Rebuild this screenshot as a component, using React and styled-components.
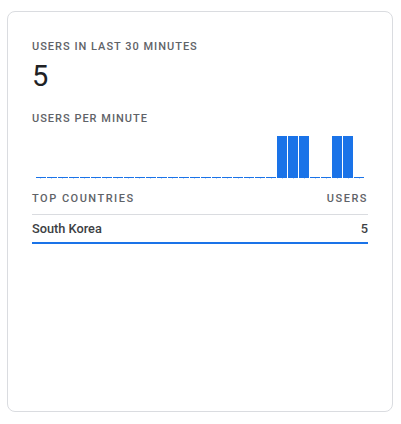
import React from "react";
import styled, { createGlobalStyle } from "styled-components";

const GlobalStyle = createGlobalStyle`
  body {
    margin: 0;
    background: #ffffff;
    font-family: Roboto, "Liberation Sans", sans-serif;
  }
`;

const perMinute = [
  0, 0, 0, 0, 0, 0, 0, 0, 0, 0, 0, 0, 0, 0, 0, 0, 0, 0, 0, 0, 0, 0, 1, 1, 1,
  0, 0, 1, 1, 0,
];

const countries = [{ name: "South Korea", users: 5 }];

function App() {
  const max = Math.max(...perMinute, 1);

  return (
    <>
      <GlobalStyle />
      <Card>
        <Label>Users in last 30 minutes</Label>
        <BigNumber>5</BigNumber>
        <Label>Users per minute</Label>
        <Chart>
          {perMinute.map((value, index) => (
            <BarSlot key={index}>
              <Bar style={{ height: value ? `${(value / max) * 42}px` : "1px" }} />
              <Tick />
            </BarSlot>
          ))}
        </Chart>
        <TableHead>
          <span>Top countries</span>
          <span>Users</span>
        </TableHead>
        {countries.map((country) => (
          <Row key={country.name}>
            <span>{country.name}</span>
            <span>{country.users}</span>
          </Row>
        ))}
      </Card>
    </>
  );
}

export default App;

const Card = styled.div`
  box-sizing: border-box;
  margin: 11px 0 0 7px;
  width: 386px;
  height: 401px;
  border: 1px solid #dadce0;
  border-radius: 8px;
  padding: 24px 24px;
  display: flex;
  flex-direction: column;
`;

const Label = styled.div`
  font-size: 11px;
  font-weight: 500;
  letter-spacing: 1px;
  text-transform: uppercase;
  color: #5f6368;
  line-height: 16px;
  margin-top: 3px;
`;

const BigNumber = styled.div`
  font-size: 29px;
  font-weight: 400;
  color: #202124;
  line-height: 36px;
  margin: 3px 0 14px;
`;

const Chart = styled.div`
  display: flex;
  align-items: flex-end;
  height: 44px;
  margin: 8px 0 0 4px;
  width: 329px;
`;

const BarSlot = styled.div`
  flex: 1;
  display: flex;
  flex-direction: column;
  align-items: stretch;
  padding-right: 1px;
`;

const Bar = styled.div`
  background: #1a73e8;
`;

const Tick = styled.div`
  width: 1px;
  height: 1px;
  margin: 0 auto;
  background: #c4d8f4;
`;

const TableHead = styled.div`
  display: flex;
  justify-content: space-between;
  margin-top: 12px;
  padding-bottom: 7px;
  border-bottom: 1px solid #dadce0;
  font-size: 11px;
  font-weight: 500;
  letter-spacing: 1.5px;
  text-transform: uppercase;
  color: #5f6368;
  line-height: 16px;
`;

const Row = styled.div`
  display: flex;
  justify-content: space-between;
  padding: 6px 0 5px;
  border-bottom: 2px solid #1a73e8;
  font-size: 12.75px;
  font-weight: 500;
  color: #3c4043;
  line-height: 16px;
`;
